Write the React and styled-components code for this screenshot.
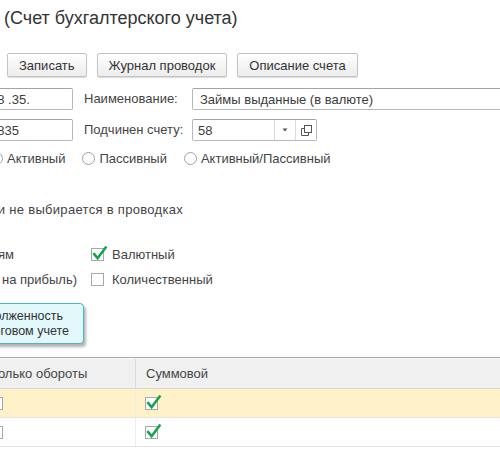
import React from 'react';
import styled, { createGlobalStyle } from 'styled-components';

const Global = createGlobalStyle`
  html, body {
    margin: 0;
    padding: 0;
    background: #fff;
  }
  body {
    font-family: "Liberation Sans", Arial, sans-serif;
    font-size: 13px;
    color: #444;
    overflow: hidden;
  }
`;

const Page = styled.div`
  width: 500px;
  height: 450px;
  overflow: hidden;
  position: relative;
`;

const Title = styled.h1`
  margin: 0;
  padding: 7px 0 0 4px;
  font-size: 18px;
  font-weight: normal;
  line-height: 22px;
  color: #333;
  white-space: nowrap;
`;

const Toolbar = styled.div`
  display: flex;
  gap: 10px;
  margin-top: 24px;
  padding-left: 7px;
`;

const Button = styled.button`
  height: 24px;
  padding: 0 11px;
  font-family: inherit;
  font-size: 13px;
  color: #333;
  background: linear-gradient(#ffffff, #ececec);
  border: 1px solid #c4c4c4;
  border-radius: 2px;
  box-shadow: 0 1px 1px rgba(0, 0, 0, 0.15);
  white-space: nowrap;
`;

const Form = styled.div`
  display: grid;
  grid-template-columns: 89px 97px 1fr;
  column-gap: 11px;
  row-gap: 9px;
  margin: 11px 0 0 -16px;
  width: calc(100% + 60px);
  align-items: center;
`;

const Label = styled.div`
  white-space: nowrap;
  line-height: 22px;
`;

const Field = styled.div`
  height: 22px;
  box-sizing: border-box;
  border: 1px solid #b8b8b8;
  border-top-color: #a4a4a4;
  border-radius: 2px;
  background: #fff;
  display: flex;
  align-items: center;
  padding-left: ${(p) => p.$pad || 5}px;
  white-space: nowrap;
  overflow: hidden;
  width: ${(p) => (p.$width ? `${p.$width}px` : 'auto')};
`;

const FieldText = styled.span`
  flex: 1;
  color: #3c3c3c;
`;

const FieldButton = styled.div`
  width: 20px;
  height: 100%;
  border-left: 1px solid #d9d9d9;
  display: flex;
  align-items: center;
  justify-content: center;
`;

const RadioRow = styled.div`
  display: flex;
  align-items: center;
  gap: 17px;
  margin: 9px 0 0 -10px;
  height: 16px;
  white-space: nowrap;
`;

const RadioItem = styled.label`
  display: flex;
  align-items: center;
  gap: 4px;
`;

const Radio = styled.span`
  width: 13px;
  height: 13px;
  box-sizing: border-box;
  border: 1px solid #a2a2a2;
  border-radius: 50%;
  background: #fff;
  flex: none;
`;

const RightEdge = styled.div`
  display: flex;
  justify-content: flex-end;
  white-space: nowrap;
  padding-right: ${(p) => p.$trim || 0}px;
`;

const Note = styled(RightEdge)`
  width: 183px;
  margin-top: 36px;
  line-height: 16px;
  letter-spacing: 0.3px;
`;

const Checks = styled.div`
  display: grid;
  grid-template-columns: 91px auto;
  grid-auto-rows: 20px;
  row-gap: 5px;
  margin-top: 26px;
  align-items: center;
  justify-content: start;
`;

const CheckItem = styled.label`
  display: flex;
  align-items: center;
  gap: 8px;
  white-space: nowrap;
`;

const Box = styled.span`
  position: relative;
  width: 13px;
  height: 13px;
  box-sizing: border-box;
  border: 1px solid #a8a8a8;
  background: #fff;
  flex: none;
  svg {
    position: absolute;
    left: 0;
    top: -3px;
  }
`;

const Tooltip = styled.div`
  width: 94px;
  height: 41px;
  box-sizing: border-box;
  margin: 14px 0 0 -10px;
  padding-top: 5px;
  background: #e2f8fb;
  border: 1px solid #48b6cb;
  border-radius: 4px;
  box-shadow: 2px 3px 3px rgba(0, 0, 0, 0.3);
  overflow: hidden;
  font-size: 12.5px;
  line-height: 15px;
  color: #333;
`;

const Table = styled.div`
  margin: 13px 0 0 -19px;
  width: calc(100% + 60px);
  border-top: 1px solid #a9a9a9;
`;

const Row = styled.div`
  display: grid;
  grid-template-columns: 155px 1fr;
  height: ${(p) => (p.$head ? 29 : 28)}px;
  background: ${(p) => (p.$head ? '#f0f0f0' : p.$current ? '#fff2c9' : '#fff')};
  border-top: ${(p) => (p.$head ? '1px solid #fafafa' : 'none')};
  border-bottom: 1px solid ${(p) => (p.$head ? '#d6d6d6' : '#e4e4e4')};
`;

const Cell = styled.div`
  display: flex;
  align-items: center;
  padding-left: ${(p) => (p.$head ? 10 : 9)}px;
  white-space: nowrap;
  border-right: 1px solid ${(p) => (p.$head ? '#d9d9d9' : '#ececec')};
`;

const Check = () => (
  <svg width="16" height="15" viewBox="0 0 16 15">
    <path d="M2.2 8.2 L5.6 12.2 L13.6 1.6" fill="none" stroke="#17a44c" strokeWidth="2.6" strokeLinecap="square" />
  </svg>
);

const CheckBox = ({ checked }) => <Box>{checked && <Check />}</Box>;

const Arrow = () => (
  <svg width="6" height="4" viewBox="0 0 6 4">
    <path d="M0.5 0.5 H5.5 L3 3.5 Z" fill="#555" />
  </svg>
);

const CopyIcon = () => (
  <svg width="11" height="11" viewBox="0 0 11 11">
    <rect x="3.5" y="0.5" width="7" height="7" fill="#fff" stroke="#555" />
    <path d="M0.5 3.5 H3.5 M0.5 3.5 V10.5 H7.5 V7.5" fill="none" stroke="#555" />
  </svg>
);

export default function App() {
  return (
    <Page>
      <Global />
      <Title>(Счет бухгалтерского учета)</Title>
      <Toolbar>
        <Button>Записать</Button>
        <Button>Журнал проводок</Button>
        <Button>Описание счета</Button>
      </Toolbar>
      <Form>
        <Field>
          <FieldText>58 .35.</FieldText>
        </Field>
        <Label>Наименование:</Label>
        <Field $pad={7}>
          <FieldText>Займы выданные (в валюте)</FieldText>
        </Field>
        <Field>
          <FieldText>5835</FieldText>
        </Field>
        <Label>Подчинен счету:</Label>
        <Field $width={125}>
          <FieldText>58</FieldText>
          <FieldButton>
            <Arrow />
          </FieldButton>
          <FieldButton>
            <CopyIcon />
          </FieldButton>
        </Field>
      </Form>
      <RadioRow>
        <RadioItem>
          <Radio />
          Активный
        </RadioItem>
        <RadioItem>
          <Radio />
          Пассивный
        </RadioItem>
        <RadioItem>
          <Radio />
          Активный/Пассивный
        </RadioItem>
      </RadioRow>
      <Note>Счет является группой и не выбирается в проводках</Note>
      <Checks>
        <RightEdge $trim={77}>Учет по подразделениям</RightEdge>
        <CheckItem>
          <CheckBox checked />
          Валютный
        </CheckItem>
        <RightEdge $trim={14}>Налоговый (учет по налогу на прибыль)</RightEdge>
        <CheckItem>
          <CheckBox />
          Количественный
        </CheckItem>
      </Checks>
      <Tooltip>
        <RightEdge $trim={20}>Дебиторская задолженность</RightEdge>
        <RightEdge $trim={14}>в налоговом учете</RightEdge>
      </Tooltip>
      <Table>
        <Row $head>
          <Cell $head>Только обороты</Cell>
          <Cell $head>Суммовой</Cell>
        </Row>
        <Row $current>
          <Cell>
            <CheckBox />
          </Cell>
          <Cell>
            <CheckBox checked />
          </Cell>
        </Row>
        <Row>
          <Cell>
            <CheckBox />
          </Cell>
          <Cell>
            <CheckBox checked />
          </Cell>
        </Row>
      </Table>
    </Page>
  );
}
